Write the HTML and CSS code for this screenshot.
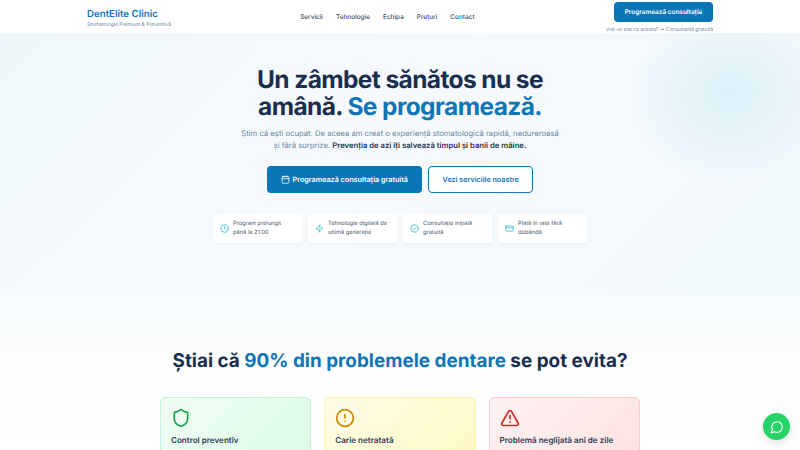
FILE: index.html
```html
<!DOCTYPE html>
<html lang="ro">
<head>
<meta charset="utf-8">
<title>DentElite Clinic</title>
<link rel="stylesheet" href="styles.css">
</head>
<body>
<header class="header">
  <div class="brand">
    <div class="brand-name">DentElite Clinic</div>
    <div class="brand-sub">Stomatologie Premium &amp; Preventivă</div>
  </div>
  <nav class="nav">
    <a>Servicii</a><a>Tehnologie</a><a>Echipa</a><a>Prețuri</a><a>Contact</a>
  </nav>
  <div class="header-cta">
    <a class="btn-small">Programează consultația</a>
    <div class="cta-note">Vrei un site ca acesta? → Consultanță gratuită</div>
  </div>
</header>
<section class="hero">
  <div class="blob"></div>
  <h1>Un zâmbet sănătos nu se<br>amână. <span class="accent">Se programează.</span></h1>
  <p class="lead">Știm că ești ocupat. De aceea am creat o experiență stomatologică rapidă, nedureroasă<br>și fără surprize. <strong>Prevenția de azi îți salvează timpul și banii de mâine.</strong></p>
  <div class="actions">
    <a class="btn btn-primary">
      <svg class="btn-icon" viewBox="0 0 24 24"><rect x="3" y="4" width="18" height="18" rx="2"/><path d="M16 2v4M8 2v4M3 10h18"/></svg>
      Programează consultația gratuită
    </a>
    <a class="btn btn-outline">Vezi serviciile noastre</a>
  </div>
  <div class="features">
    <div class="feature">
      <svg class="f-icon" viewBox="0 0 24 24"><circle cx="12" cy="12" r="10"/><path d="M12 6v6l4 2"/></svg>
      <span>Program prelungit<br>până la 21:00</span>
    </div>
    <div class="feature">
      <svg class="f-icon" viewBox="0 0 24 24"><path d="M4 14a1 1 0 0 1-.78-1.63l9.900-10.200a.5.5 0 0 1 .86.46l-1.920 6.020A1 1 0 0 0 13 10h7a1 1 0 0 1 .78 1.630l-9.900 10.200a.5.5 0 0 1-.86-.46l1.920-6.020A1 1 0 0 0 11 14z"/></svg>
      <span>Tehnologie digitală de<br>ultimă generație</span>
    </div>
    <div class="feature">
      <svg class="f-icon" viewBox="0 0 24 24"><circle cx="12" cy="12" r="10"/><path d="m8 12.500 3 2.500 5-5"/></svg>
      <span>Consultație inițială<br>gratuită</span>
    </div>
    <div class="feature">
      <svg class="f-icon" viewBox="0 0 24 24"><rect x="2" y="5" width="20" height="14" rx="2"/><path d="M2 10h20"/></svg>
      <span>Plată în rate fără<br>dobândă</span>
    </div>
  </div>
</section>
<section class="prevent">
  <h2>Știai că <span class="accent">90% din problemele dentare</span> se pot evita?</h2>
  <div class="cards">
    <div class="card card-green">
      <svg class="c-icon c-shield" viewBox="0 0 24 24"><path d="M20 13c0 5-3.500 7.500-7.660 8.950a1 1 0 0 1-.67-.01C7.500 20.500 4 18 4 13V6a1 1 0 0 1 1-1c2 0 4.500-1.200 6.240-2.720a1.170 1.170 0 0 1 1.520 0C14.510 3.810 17 5 19 5a1 1 0 0 1 1 1z"/></svg>
      <h3>Control preventiv</h3>
    </div>
    <div class="card card-yellow">
      <svg class="c-icon" viewBox="0 0 24 24"><circle cx="12" cy="12" r="10"/><path d="M12 8v4M12 16h.01"/></svg>
      <h3>Carie netratată</h3>
    </div>
    <div class="card card-red">
      <svg class="c-icon" viewBox="0 0 24 24"><path d="m21.730 18-8-14a2 2 0 0 0-3.480 0l-8 14A2 2 0 0 0 4 21h16a2 2 0 0 0 1.730-3Z"/><path d="M12 9v4M12 17h.01"/></svg>
      <h3>Problemă neglijată ani de zile</h3>
    </div>
  </div>
</section>
<a class="chat" aria-label="WhatsApp">
  <svg viewBox="0 0 24 24"><path d="M7.900 20A9 9 0 1 0 4 16.100L2 22Z"/></svg>
</a>
</body>
</html>
```
FILE: styles.css
```css
* { box-sizing: border-box; }
html, body { margin: 0; height: 450px; overflow: hidden; }
body { font-family: Inter, "Liberation Sans", sans-serif; background: #fff; color: #1a2f4f; text-rendering: geometricPrecision; }
.header { height: 33px; background: #fff; display: flex; justify-content: space-between; align-items: flex-start; padding: 0 87px; }
.brand { padding-top: 7.500px; }
.brand-name { font-size: 9.700px; line-height: 13.500px; font-weight: 600; color: #0f75b5; }
.brand-sub { font-size: 5px; line-height: 8px; color: #6f879e; }
.nav { display: flex; gap: 13px; padding-top: 11.500px; margin-left: -2px; font-size: 6.450px; line-height: 11px; font-weight: 500; color: #3d4d62; }
.header-cta { display: flex; flex-direction: column; align-items: flex-end; padding-top: 2px; }
.btn-small { width: 99px; height: 20px; background: #0a76b7; color: #fff; border-radius: 4px; display: flex; align-items: center; justify-content: center; font-size: 6.450px; font-weight: 600; }
.cta-note { font-size: 4.950px; line-height: 8px; margin-top: 4px; color: #6f879e; }
.hero { position: relative; height: 262px; overflow: hidden; text-align: center; padding-top: 33px; background: linear-gradient(135deg, #eef7fb 0%, #f7fafd 45%, #f0f8fc 100%); }
.blob { position: absolute; top: -30px; left: 625px; width: 210px; height: 180px; background: radial-gradient(closest-side, #dcf0f8 0%, rgba(223,240,248,0) 100%); }
h1 { position: relative; margin: 0; font-size: 24.500px; line-height: 26.500px; font-weight: 700; letter-spacing: -0.600px; color: #1a2f4f; }
.accent { color: #0f75b5; }
.lead { position: relative; margin: 9px 0 0; font-size: 7.700px; line-height: 11.500px; color: #6b87a3; }
.lead strong { font-weight: 600; color: #1f3550; }
.actions { position: relative; display: flex; justify-content: center; gap: 6.500px; margin-top: 15px; }
.btn { height: 26.500px; border-radius: 4px; display: flex; align-items: center; justify-content: center; font-size: 7.200px; font-weight: 600; }
.btn-primary { width: 155px; background: #0a76b7; color: #fff; gap: 3px; }
.btn-icon { width: 9px; height: 9px; fill: none; stroke: #fff; stroke-width: 2; stroke-linecap: round; }
.btn-outline { width: 105px; background: #fff; color: #0f75b5; border: 1.500px solid #0f75b5; }
.features { position: relative; display: flex; justify-content: center; gap: 6px; margin-top: 21.500px; }
.feature { width: 89px; height: 29px; background: #fff; border-radius: 3px; display: flex; align-items: center; gap: 4px; padding-left: 7px; text-align: left; font-size: 5.700px; line-height: 8.500px; color: #46586c; box-shadow: 0 1px 3px rgba(30,60,90,.04); }
.f-icon { width: 9px; height: 9px; flex: none; fill: none; stroke: #2cb5d3; stroke-width: 2; stroke-linecap: round; stroke-linejoin: round; }
.prevent { height: 155px; background: linear-gradient(180deg, #f8fbfd 0%, #fff 100%); padding-top: 53px; text-align: center; }
h2 { margin: 0; font-size: 18.900px; line-height: 26px; font-weight: 700; color: #1a2f4f; }
.cards { display: flex; justify-content: center; gap: 12.800px; margin-top: 23px; }
.card { width: 151.500px; height: 60px; border-radius: 6px; border: 1px solid; padding: 10px 10px 0; text-align: left; }
.card h3 { margin: 0; font-size: 8.100px; line-height: 12px; font-weight: 600; color: #2c3d55; padding-top: 6px; }
.c-icon { display: block; width: 20px; height: 20px; fill: none; stroke-width: 2; stroke-linecap: round; stroke-linejoin: round; }
.c-shield { width: 22px; height: 20px; margin-left: -1px; }
.card-green { background: linear-gradient(135deg, #f0fdf4, #dcfce7); border-color: #c5f3d5; }
.card-green .c-icon { stroke: #16a34a; }
.card-yellow { background: linear-gradient(135deg, #fefce8, #fef9c3); border-color: #fdf0b0; }
.card-yellow .c-icon { stroke: #ca8a04; }
.card-red { background: linear-gradient(135deg, #fef2f2, #fee2e2); border-color: #fecaca; }
.card-red .c-icon { stroke: #dc2626; }
.chat { position: fixed; right: 10px; bottom: 10px; width: 27px; height: 27px; border-radius: 50%; background: #25d366; display: flex; align-items: center; justify-content: center; box-shadow: 0 3px 8px rgba(0,0,0,.12); }
.chat svg { width: 14px; height: 14px; fill: none; stroke: #fff; stroke-width: 2; stroke-linecap: round; stroke-linejoin: round; }
```
